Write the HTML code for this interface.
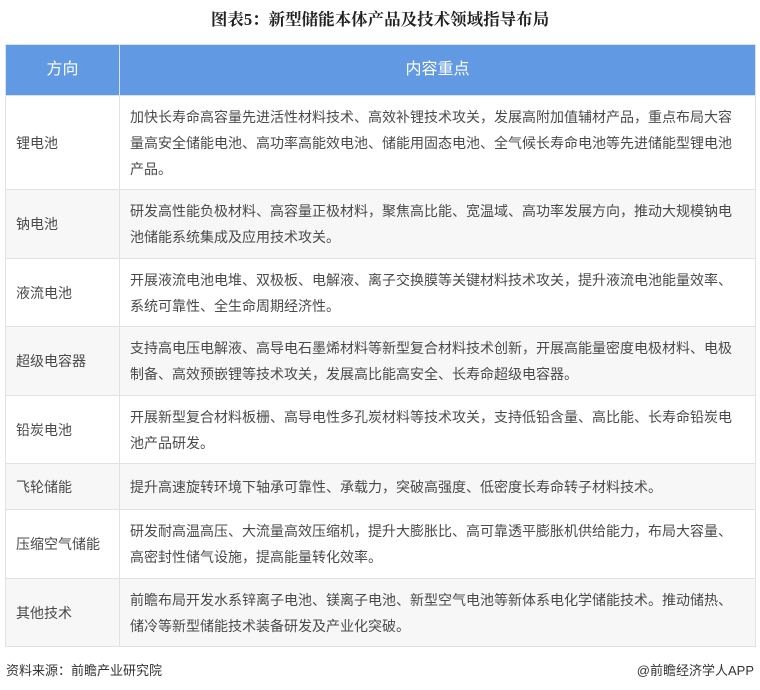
<!DOCTYPE html>
<html><head><meta charset="utf-8"><style>
body{margin:0;width:760px;height:690px;background:#fff;font-family:"Liberation Sans","Noto Sans CJK SC",sans-serif;color:#4a4a4a;position:relative;overflow:hidden}
.t{position:absolute;top:8px;left:0;width:760px;text-align:center;font-family:"Liberation Serif","Noto Serif CJK SC",serif;font-weight:bold;font-size:16.5px;color:#222;line-height:24px}
table{position:absolute;left:5px;top:44px;width:751px;border-collapse:collapse;font-size:14px}
td,th{border:1px solid #e2e2e2;padding:0 10px;vertical-align:middle;line-height:26px}
th{background:#6299e3;color:#fff;font-weight:normal;font-size:16px;height:50px;border-color:#d8e4f4}
td.a{width:93px}
tr:nth-child(odd) td{background:#f7f7f7}
.f{position:absolute;top:660px;font-size:13px;color:#333}
</style></head><body>
<div class="t">图表5：新型储能本体产品及技术领域指导布局</div>
<table>
<tr><th>方向</th><th>内容重点</th></tr>
<tr style="height:94px"><td class="a">锂电池</td><td>加快长寿命高容量先进活性材料技术、高效补锂技术攻关，发展高附加值辅材产品，重点布局大容量高安全储能电池、高功率高能效电池、储能用固态电池、全气候长寿命电池等先进储能型锂电池产品。</td></tr>
<tr style="height:69px"><td class="a">钠电池</td><td>研发高性能负极材料、高容量正极材料，聚焦高比能、宽温域、高功率发展方向，推动大规模钠电池储能系统集成及应用技术攻关。</td></tr>
<tr style="height:68px"><td class="a">液流电池</td><td>开展液流电池电堆、双极板、电解液、离子交换膜等关键材料技术攻关，提升液流电池能量效率、系统可靠性、全生命周期经济性。</td></tr>
<tr style="height:69px"><td class="a">超级电容器</td><td>支持高电压电解液、高导电石墨烯材料等新型复合材料技术创新，开展高能量密度电极材料、电极制备、高效预嵌锂等技术攻关，发展高比能高安全、长寿命超级电容器。</td></tr>
<tr style="height:68px"><td class="a">铅炭电池</td><td>开展新型复合材料板栅、高导电性多孔炭材料等技术攻关，支持低铅含量、高比能、长寿命铅炭电池产品研发。</td></tr>
<tr style="height:46px"><td class="a">飞轮储能</td><td>提升高速旋转环境下轴承可靠性、承载力，突破高强度、低密度长寿命转子材料技术。</td></tr>
<tr style="height:69px"><td class="a">压缩空气储能</td><td>研发耐高温高压、大流量高效压缩机，提升大膨胀比、高可靠透平膨胀机供给能力，布局大容量、高密封性储气设施，提高能量转化效率。</td></tr>
<tr style="height:68px"><td class="a">其他技术</td><td>前瞻布局开发水系锌离子电池、镁离子电池、新型空气电池等新体系电化学储能技术。推动储热、储冷等新型储能技术装备研发及产业化突破。</td></tr>
</table>
<div class="f" style="left:6px">资料来源：前瞻产业研究院</div>
<div class="f" style="right:6px">@前瞻经济学人APP</div>
</body></html>
